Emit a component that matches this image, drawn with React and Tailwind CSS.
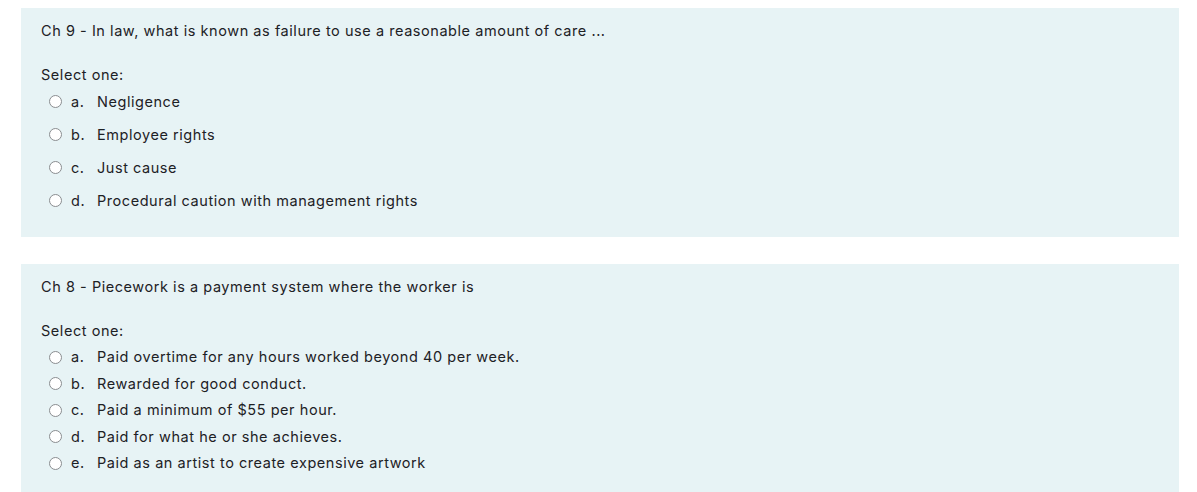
const questions = [
  {
    text: "Ch 9 - In law, what is known as failure to use a reasonable amount of care ...",
    rowH: "h-[33px]",
    gap: "mt-0",
    options: [
      ["a.", "Negligence"],
      ["b.", "Employee rights"],
      ["c.", "Just cause"],
      ["d.", "Procedural caution with management rights"],
    ],
    panelH: "h-[229px]",
  },
  {
    text: "Ch 8 - Piecework is a payment system where the worker is",
    rowH: "h-[26.5px]",
    gap: "mt-[3px]",
    options: [
      ["a.", "Paid overtime for any hours worked beyond 40 per week."],
      ["b.", "Rewarded for good conduct."],
      ["c.", "Paid a minimum of $55 per hour."],
      ["d.", "Paid for what he or she achieves."],
      ["e.", "Paid as an artist to create expensive artwork"],
    ],
    panelH: "h-[228px]",
  },
];

function Radio() {
  return (
    <span className="ml-[8px] mr-[9px] inline-block h-[13px] w-[13px] shrink-0 rounded-full border border-[#8a8d90] bg-white" />
  );
}

function Question({ q }) {
  return (
    <div className={`${q.panelH} bg-[#e7f3f5] pl-[20px] pt-[12px]`}>
      <div className="leading-[21px]">{q.text}</div>
      <div className="mt-[23px] leading-[21px]">Select one:</div>
      <div className={q.gap}>
        {q.options.map(([letter, label]) => (
          <div key={letter} className={`${q.rowH} flex items-center`}>
            <Radio />
            <span className="w-[26px] shrink-0">{letter}</span>
            <span>{label}</span>
          </div>
        ))}
      </div>
    </div>
  );
}

export default function App() {
  return (
    <div
      className="h-[492px] w-[1197px] overflow-hidden bg-white px-[18px] pt-[8px] text-[14.5px] tracking-[0.55px] text-[#1d2125]"
      style={{ fontFamily: "Inter, 'Noto Sans', sans-serif" }}
    >
      <div className="ml-[3px] flex w-[1158px] flex-col gap-[27px]">
        {questions.map((q, i) => (
          <Question key={i} q={q} />
        ))}
      </div>
    </div>
  );
}
